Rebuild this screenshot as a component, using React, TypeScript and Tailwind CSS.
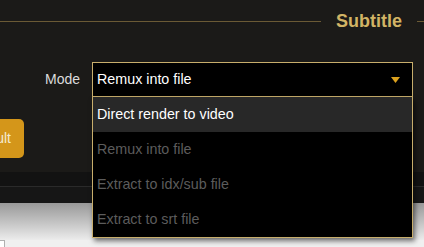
import React from 'react';

const options = [
  { label: 'Direct render to video', active: true },
  { label: 'Remux into file', active: false },
  { label: 'Extract to idx/sub file', active: false },
  { label: 'Extract to srt file', active: false },
];

export default function App() {
  return (
    <div className="w-[424px] h-[247px] overflow-hidden bg-[#f0f0f0] font-['Liberation_Sans',Arial,sans-serif]">
      <div className="h-[172px] bg-[#1b1a18]">
        {/* section header */}
        <div className="h-[42px] flex items-center">
          <div className="flex-1 h-px bg-[#6b5a35]" />
          <span className="px-[15px] text-[18px] font-bold text-[#d2b465] leading-none">Subtitle</span>
          <div className="w-[7px] h-px bg-[#6b5a35]" />
        </div>

        <div className="h-[20px]" />

        <div className="flex items-start">
          <div className="w-[92px] shrink-0 flex flex-col">
            <div className="h-[35px] flex items-center justify-end pr-[12px] text-[14px] text-[#dcdcdc]">Mode</div>
            <div className="h-[22px]" />
            <button className="ml-[-50px] w-[74px] h-[39px] rounded-[5px] bg-[#d4961a] text-[14px] text-[#f4ead0] text-right pr-[13px]">
              Default
            </button>
          </div>

          <div className="relative w-[321px]">
            <div className="h-[35px] border border-[#c8ae6c] bg-black flex items-center pl-[4px] pr-[12px]">
              <span className="flex-1 text-[14.3px] text-white">Remux into file</span>
              <svg width="9" height="6" viewBox="0 0 9 6">
                <polygon points="0,0 9,0 4.5,6" fill="#dca21e" />
              </svg>
            </div>
            <div className="absolute left-0 top-full w-[321px] border-x border-b border-[#c8ae6c] bg-black shadow-[2px_3px_5px_rgba(0,0,0,0.55)] z-10">
              {options.map((o) => (
                <div
                  key={o.label}
                  className={`h-[35px] flex items-center pl-[4px] text-[14.3px] ${o.active ? 'bg-[#282828] text-white' : 'text-[#5c5c5c]'}`}
                >
                  {o.label}
                </div>
              ))}
            </div>
          </div>
        </div>
      </div>

      <div className="h-[14px] bg-[#121212]" />
      <div className="h-px bg-[#2a2a2a]" />
      <div className="h-[16px] bg-[#161616]" />
      <div className="h-[37px] bg-gradient-to-b from-[#999999] to-[#ececec]" />
      <div className="h-[7px] bg-[#f0f0f0] flex">
        <div className="w-[5px] h-[7px] bg-white border-r border-t border-[#b0b0b0]" />
      </div>
    </div>
  );
}
